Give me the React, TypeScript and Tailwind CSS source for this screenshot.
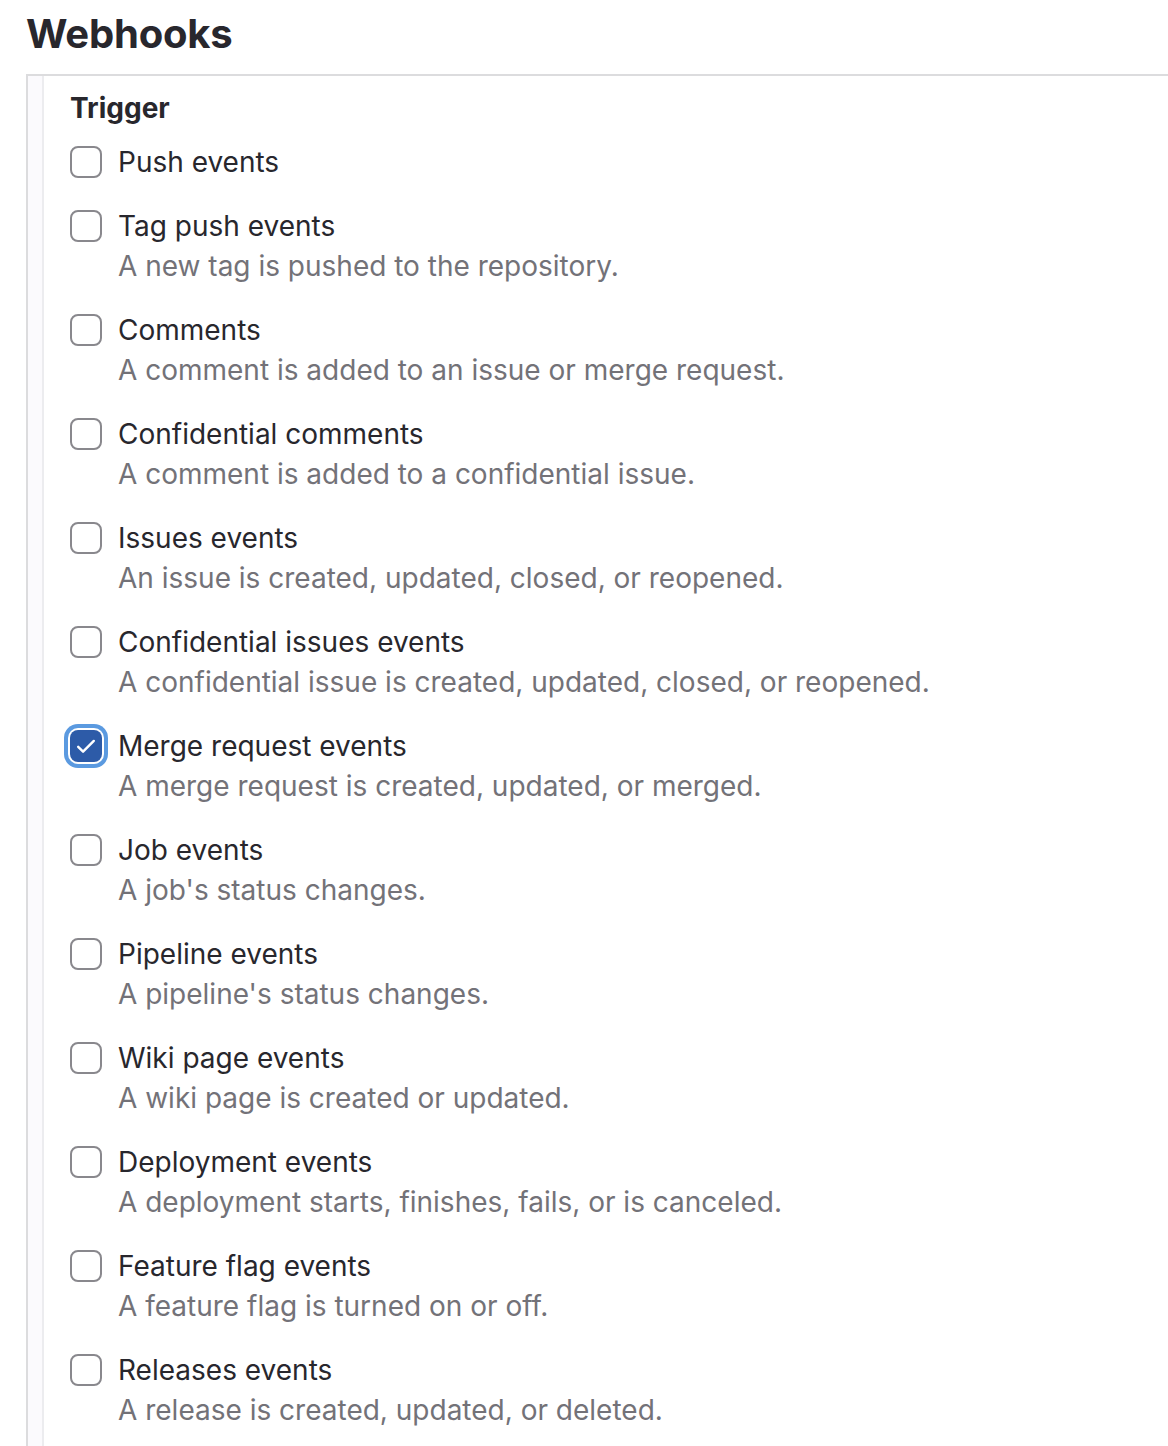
import React, { useState } from 'react';

type Trigger = {
  label: string;
  desc?: string;
};

const triggers: Trigger[] = [
  { label: 'Push events' },
  { label: 'Tag push events', desc: 'A new tag is pushed to the repository.' },
  { label: 'Comments', desc: 'A comment is added to an issue or merge request.' },
  { label: 'Confidential comments', desc: 'A comment is added to a confidential issue.' },
  { label: 'Issues events', desc: 'An issue is created, updated, closed, or reopened.' },
  { label: 'Confidential issues events', desc: 'A confidential issue is created, updated, closed, or reopened.' },
  { label: 'Merge request events', desc: 'A merge request is created, updated, or merged.' },
  { label: 'Job events', desc: "A job's status changes." },
  { label: 'Pipeline events', desc: "A pipeline's status changes." },
  { label: 'Wiki page events', desc: 'A wiki page is created or updated.' },
  { label: 'Deployment events', desc: 'A deployment starts, finishes, fails, or is canceled.' },
  { label: 'Feature flag events', desc: 'A feature flag is turned on or off.' },
  { label: 'Releases events', desc: 'A release is created, updated, or deleted.' },
];

const Checkbox: React.FC<{ checked: boolean; onToggle: () => void }> = ({ checked, onToggle }) => (
  <button
    type="button"
    onClick={onToggle}
    className={
      checked
        ? 'w-[32px] h-[32px] shrink-0 rounded-[8px] bg-[#2d5ba8] flex items-center justify-center shadow-[0_0_0_2px_#ffffff,0_0_0_6px_#5b9ae0]'
        : 'w-[32px] h-[32px] shrink-0 rounded-[8px] border-2 border-[#89888d] bg-white'
    }
  >
    {checked && (
      <svg width="26" height="26" viewBox="0 0 16 16" fill="none">
        <path d="M3.2 8.5l3 3L12.8 4.9" stroke="#ffffff" strokeWidth="1.5" strokeLinecap="round" strokeLinejoin="round" />
      </svg>
    )}
  </button>
);

export default function App() {
  const [checked, setChecked] = useState<Record<string, boolean>>({ 'Merge request events': true });

  return (
    <div className="bg-white min-h-[1446px] pl-[26px] pt-[10px] font-['Inter','Liberation_Sans',sans-serif]">
      <h1 className="text-[40px] leading-[48px] font-bold text-[#28272d] tracking-[-0.2px]">Webhooks</h1>

      {/* Trigger section */}
      <div className="mt-[16px] flex border-t-2 border-l-2 border-[#dcdcde] min-h-[1400px]">
        <div className="w-[16px] shrink-0 bg-[#fbfafd] border-r-2 border-[#ececef]"></div>
        <div className="pl-[26px] pt-[12px] pb-[24px]">
          <h3 className="text-[28px] leading-[40px] font-bold text-[#28272d] mb-[14px]">Trigger</h3>
          <div className="flex flex-col gap-[24px]">
            {triggers.map((t) => (
              <div key={t.label} className="flex gap-[16px]">
                <div className="h-[40px] flex items-center">
                  <Checkbox
                    checked={!!checked[t.label]}
                    onToggle={() => setChecked({ ...checked, [t.label]: !checked[t.label] })}
                  />
                </div>
                <div>
                  <p className="text-[28px] leading-[40px] text-[#28272d]">{t.label}</p>
                  {t.desc && <p className="text-[28px] leading-[40px] text-[#737278]">{t.desc}</p>}
                </div>
              </div>
            ))}
          </div>
        </div>
      </div>
    </div>
  );
}
